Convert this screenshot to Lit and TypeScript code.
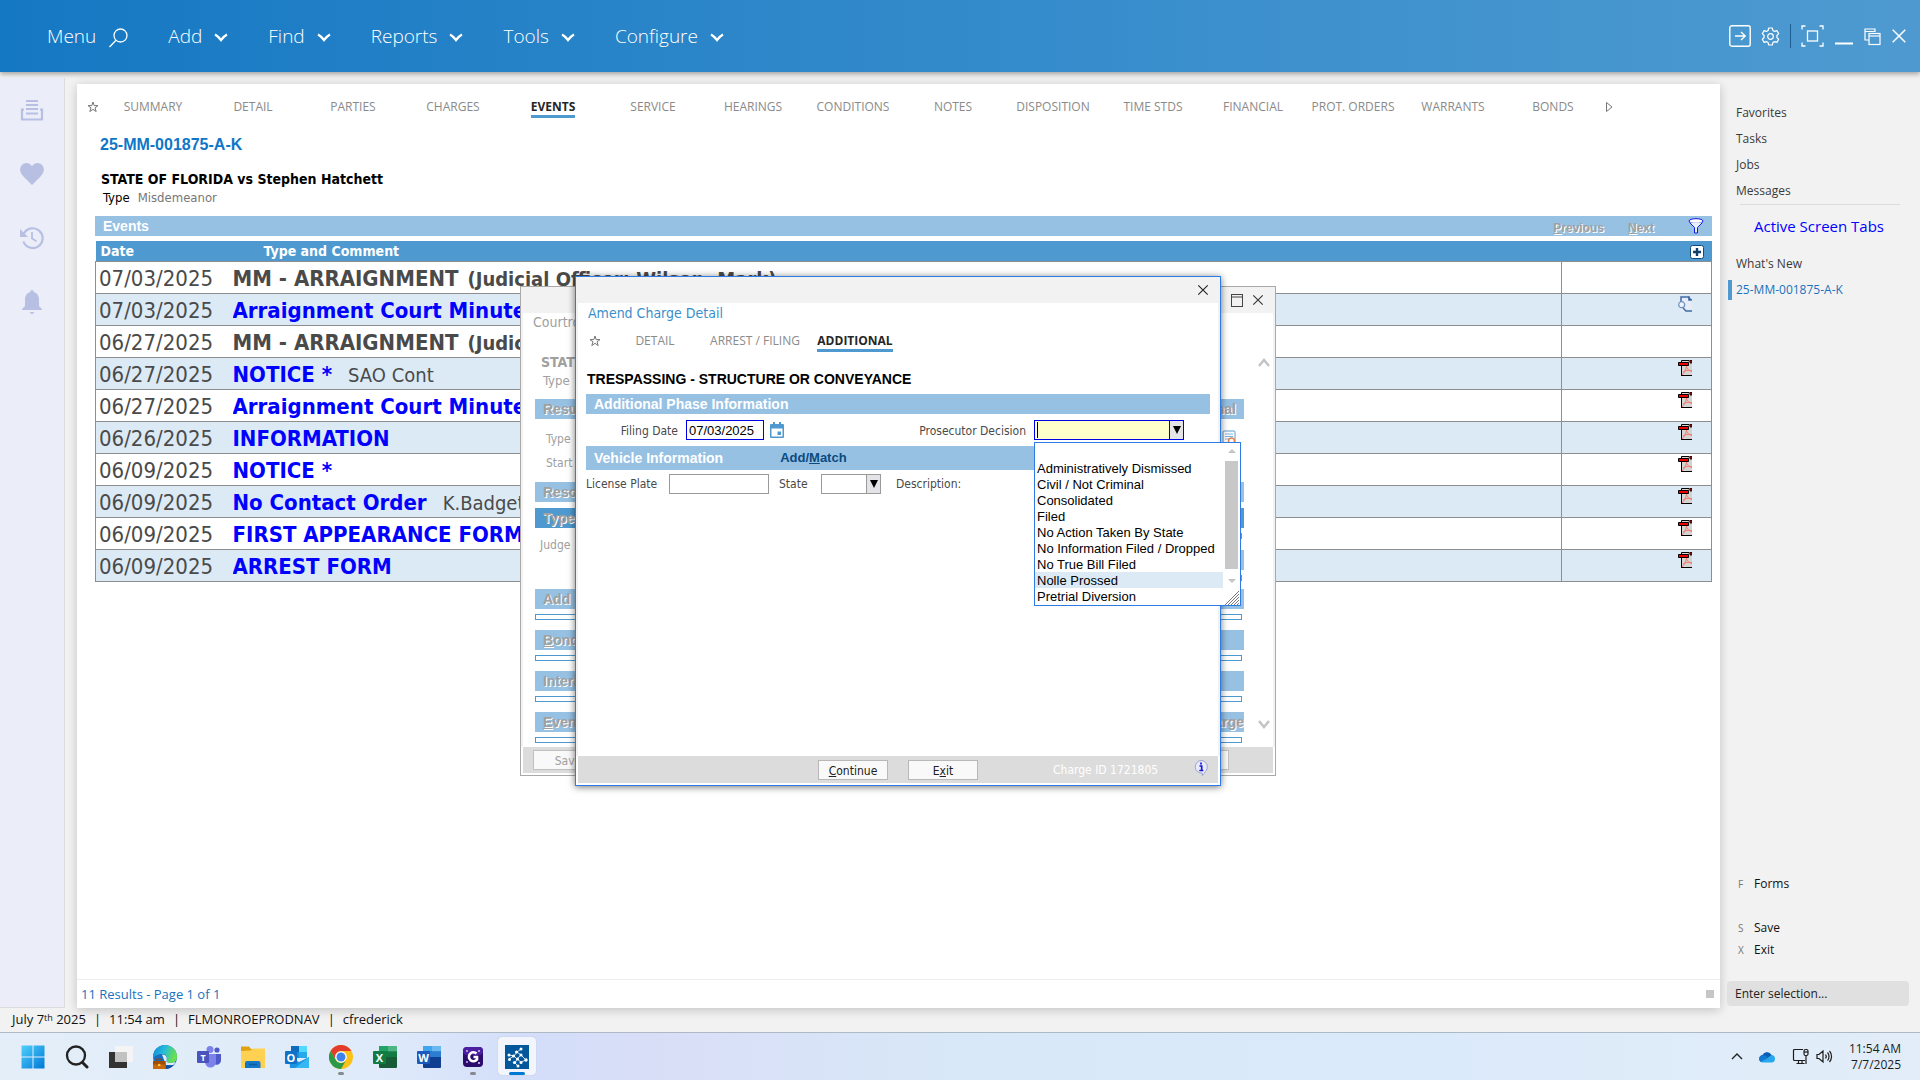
import { LitElement, html, svg, css, nothing } from "lit";
import { customElement } from "lit/decorators.js";
import { classMap } from "lit/directives/class-map.js";

const base = css`
  *, *::before, *::after { box-sizing: border-box; }
  button { font: inherit; color: inherit; background: none; border: 0; padding: 0; margin: 0; cursor: pointer; }
  a { color: inherit; text-decoration: none; }
  svg { display: block; flex: none; }
  ul { list-style: none; margin: 0; padding: 0; }
  .engraved { color: #a0a0a0; text-shadow: 1px 1px 0 #fff; }
  .tabs { display: flex; align-items: center; height: 24px; font: 12px/24px "Open Sans", sans-serif; color: #8a8a8a; }
  .tab { width: 100px; flex: none; display: flex; justify-content: center; }
  .tab span { display: block; line-height: 17px; white-space: nowrap; border-bottom: 3px solid transparent; margin-top: 2px; }
  .tab.on span { color: #262626; font-weight: 700; border-color: #4e9ad0; }
  .bar { display: flex; align-items: center; height: 20px; padding: 0 8px; background: #96c1e3; color: #fff; font: 700 14px/20px "Liberation Sans", sans-serif; white-space: nowrap; }
  .bar.dark { background: #4e9ad0; }
`;

const star = svg`<svg width="12" height="12" viewBox="0 0 12 12" fill="none" stroke="#777" stroke-width="1"><path d="M6 1l1.2 3.6H11L8 6.8l1.2 3.8L6 8.3l-3.2 2.3L4 6.8 1 4.6h3.8z"/></svg>`;
const cross = (c: string, s: number) => svg`<svg width=${s} height=${s} viewBox="0 0 14 14" stroke=${c} stroke-width="1.3" fill="none"><path d="M1.5 1.5l11 11M12.5 1.5l-11 11"/></svg>`;
const chevron = svg`<svg width="14" height="9" viewBox="0 0 14 9" fill="none" stroke="#fff" stroke-width="2.4"><path d="M1 1.5c2 1 4 3 6 5.5 2-2.500 4-4.500 6-5.500"/></svg>`;

@customElement("top-bar")
class TopBar extends LitElement {
  static styles = [base, css`
    :host { display: flex; align-items: center; justify-content: space-between; height: 72px; padding: 0 13px 0 47px;
      background: linear-gradient(90deg, #1578c3, #3c90cd 65%, #4e9ad0); color: #fff; box-shadow: 0 2px 5px rgba(0, 0, 0, .35);
      font: 19px/24px "Open Sans", sans-serif; font-weight: 300; position: relative; z-index: 1; }
    .menu { display: flex; gap: 40px; }
    .item { display: flex; align-items: center; gap: 12px; }
    .item svg { margin-top: 3px; }
    .tools { display: flex; align-items: center; gap: 10px; }
    .rule { width: 1px; height: 24px; background: #1c5d92; }
  `];
  render() {
    return html`
      <nav class="menu" aria-label="Main">
        <button class="item">Menu
          <svg width="20" height="20" viewBox="0 0 20 20" fill="none" stroke="#fff" stroke-width="1.3"><circle cx="12.500" cy="7.500" r="6.500"/><path d="M8 12.300L1.500 19"/></svg>
        </button>
        ${["Add", "Find", "Reports", "Tools", "Configure"].map((t) => html`<button class="item">${t} ${chevron}</button>`)}
      </nav>
      <div class="tools">
        <button aria-label="Open"><svg width="22" height="22" viewBox="0 0 22 22" fill="none" stroke="#fff" stroke-width="1.4"><rect x=".8" y=".8" width="20.400" height="20.400" rx="2"/><path d="M6 11h10M12 7l4.200 4-4.200 4"/></svg></button>
        <button aria-label="Settings"><svg width="19" height="19" viewBox="0 0 19 19" fill="none" stroke="#fff" stroke-width="1.200"><circle cx="9.500" cy="9.500" r="2.800"/><path d="M7.700 1h3.600l.6 2.500 1.600.9 2.400-.8 1.800 3.100-1.800 1.800v2l1.800 1.800-1.800 3.100-2.400-.8-1.600.9-.6 2.500H7.700l-.6-2.500-1.600-.9-2.400.8-1.800-3.100 1.800-1.800v-2L1.300 6.700l1.800-3.100 2.400.8 1.600-.9z" stroke-linejoin="round"/></svg></button>
        <span class="rule"></span>
        <button aria-label="Focus"><svg width="23" height="22" viewBox="0 0 23 22" fill="none" stroke="#fff" stroke-width="1.300"><path d="M1 4.500V1h3.500M18.500 1H22v3.500M22 17.500V21h-3.500M4.500 21H1v-3.500"/><rect x="6.500" y="6" width="10" height="10"/></svg></button>
        <button aria-label="Minimize"><svg width="20" height="20" viewBox="0 0 20 20"><path d="M1 17.500h18" stroke="#fff" stroke-width="2"/></svg></button>
        <button aria-label="Restore"><svg width="17" height="19" viewBox="0 0 17 19" fill="none" stroke="#fff" stroke-width="1.200"><path d="M5 13H1V2h10v3M1 4.500h10"/><rect x="5" y="6.500" width="11" height="11"/><path d="M5 9h11"/></svg></button>
        <button aria-label="Close">${cross("#fff", 16)}</button>
      </div>`;
  }
}

@customElement("side-rail")
class SideRail extends LitElement {
  static styles = [base, css`
    :host { display: flex; flex-direction: column; align-items: center; gap: 40px; width: 65px; padding-top: 20px; background: #ebeef8; border: solid #dcdce0; border-width: 0 1px 1px 0; }
  `];
  render() {
    const c = "#b7bfe3";
    return html`
      <button aria-label="Records"><svg width="24" height="24" viewBox="0 0 24 24" fill=${c}><path d="M6 2h12v2H6zM6 6h12v2H6zM6 10h12v2H6zM6 14.500h12v2H6z"/><path d="M4 11.500H2V21.500h20v-10H20" fill="none" stroke=${c} stroke-width="2.200"/></svg></button>
      <button aria-label="Favorites"><svg width="24" height="24" viewBox="0 0 24 24" fill=${c}><path d="M12 23L3 14C-3 7.500 1.500 1 6.500 1 9 1 11 2.300 12 4.200 13 2.300 15 1 17.500 1c5 0 9.500 6.500 3.500 13z"/></svg></button>
      <button aria-label="History"><svg width="24" height="24" viewBox="0 0 24 24" fill="none" stroke=${c} stroke-width="2.200"><path d="M4 7.500a9.900 9.900 0 1 1-.6 8"/><path d="M12 6v6.500l4.500 2.700" stroke-width="1.800"/><path d="M0 3v8h8z" fill=${c} stroke="none"/></svg></button>
      <button aria-label="Alerts"><svg width="24" height="24" viewBox="0 0 24 24" fill=${c}><path d="M12 0c1.200 0 1.600.9 1.600 2 3.600.8 5.400 3.800 5.400 7.500V16l3 3v1H2v-1l3-3V9.500C5 5.800 6.800 2.800 10.400 2c0-1.100.4-2 1.600-2zM10 22h4c0 1.200-1 2-2 2s-2-.8-2-2z"/></svg></button>`;
  }
}

type Row = { date: string; title: string; note?: string; officer?: string; link: boolean; icon: "" | "doc" | "pdf" };
const ROWS: Row[] = [
  { date: "07/03/2025", title: "MM - ARRAIGNMENT", officer: "(Judicial Officer: Wilson, Mark)", link: false, icon: "" },
  { date: "07/03/2025", title: "Arraignment Court Minutes", link: true, icon: "doc" },
  { date: "06/27/2025", title: "MM - ARRAIGNMENT", officer: "(Judicial Officer: Wilson, Mark)", link: false, icon: "" },
  { date: "06/27/2025", title: "NOTICE *", note: "SAO Cont", link: true, icon: "pdf" },
  { date: "06/27/2025", title: "Arraignment Court Minutes", link: true, icon: "pdf" },
  { date: "06/26/2025", title: "INFORMATION", link: true, icon: "pdf" },
  { date: "06/09/2025", title: "NOTICE *", link: true, icon: "pdf" },
  { date: "06/09/2025", title: "No Contact Order", note: "K.Badgett", link: true, icon: "pdf" },
  { date: "06/09/2025", title: "FIRST APPEARANCE FORM", link: true, icon: "pdf" },
  { date: "06/09/2025", title: "ARREST FORM", link: true, icon: "pdf" },
];
const pdf = svg`<svg width="14" height="16" viewBox="0 0 14 16"><path d="M3 0h11v16H3z" fill="#d4d4d4"/><path d="M3.500 15.500V.5H11v1M3 15.500h11" fill="none" stroke="#000"/><path d="M4 15c2-2 4.500-6 4.500-9 0 3 2.500 5 5.500 5.500M5 12c2-1.500 6-2 9-1.500" fill="none" stroke="#f57d6e"/><path d="M12 0h2v3h-2z" fill="#c00" stroke="#000" stroke-width=".8"/><path d="M.5 2.500h10v3H.5z" fill="#f00000" stroke="#000"/></svg>`;
const doc = svg`<svg width="14" height="16" viewBox="0 0 14 16"><path d="M3 .5h8l2.500 3v12H3z" fill="#e6ecf8"/><path d="M3 6V1h8v3h3M5 12l3 3h6" fill="none" stroke="#3f6ba5" stroke-width="1.500"/><path d="M10.500 0L14 4h-3.500z" fill="#3f6ba5"/><circle cx="3.700" cy="8.700" r="3" fill="#eef3fc" stroke="#6d8fbd" stroke-width="1.200"/></svg>`;

@customElement("case-panel")
class CasePanel extends LitElement {
  static styles = [base, css`
    :host { display: flex; flex-direction: column; background: #fff; box-shadow: 0 2px 10px rgba(0, 0, 0, .2); min-width: 0; }
    .tabs { padding-left: 10px; margin-top: 11px; }
    .star { width: 16px; display: flex; }
    .play { margin-left: 2px; }
    .case { margin: 16px 0 0 23px; font: 700 16px/20px "Liberation Sans", sans-serif; color: #0f76c8; }
    .style { margin: 15px 0 0 24px; font: 700 14px/18px "DejaVu Sans Condensed", "Noto Sans", sans-serif; color: #000; }
    .kind { display: flex; gap: 8px; margin: 1px 0 0 26px; font: 13px/18px "DejaVu Sans Condensed", "Noto Sans", sans-serif; color: #777; }
    .kind b { font-weight: 400; color: #000; }
    .grid { margin: 9px 8px 0 18px; }
    .bar .right { margin-left: auto; display: flex; gap: 24px; align-items: center; font-size: 12px; }
    .bar .engraved { padding-top: 3px; }
    .bar u { text-decoration: underline; }
    .bar svg { margin-left: 10px; }
    table { width: 100%; margin-top: 5px; border-collapse: collapse; table-layout: fixed; font: 22px/28px "DejaVu Sans Condensed", "Noto Sans", sans-serif; color: #4a4a4a; }
    th { height: 20px; padding: 1px 0 0; background: #4e9ad0; color: #fff; font: 700 14px/19px "DejaVu Sans Condensed", "Noto Sans", sans-serif; text-align: left; }
    th.h1 { padding-left: 5px; } th.h2 { padding-left: 31px; }
    .h4 svg { margin: 0 8px 0 auto; }
    .c1 { width: 137px; } .c4 { width: 150px; }
    td { height: 32px; padding: 2px 0 0; border: solid #8e8e8e; border-width: 1px 0; white-space: nowrap; overflow: hidden; }
    td:first-child { border-left-width: 1px; padding-left: 3px; }
    td:last-child { border-left-width: 1px; border-right-width: 1px; vertical-align: top; }
    td:last-child svg { margin: 0 19px 0 auto; }
    tr:nth-child(even) td { background: #dceaf6; }
    .t { font-weight: 700; margin-right: 16px; }
    .t.plain { margin-right: 9px; }
    a.t { color: #00f; }
    .o { font-size: 20px; font-weight: 700; }
    .n { font-size: 20px; }
    .foot { margin-top: auto; display: flex; align-items: center; justify-content: space-between; height: 29px; padding: 0 6px 0 4px; border-top: 1px solid #eee; font: 13px/18px "Open Sans", sans-serif; color: #1a72bd; }
    .grip { width: 8px; height: 8px; background: #c6c6c6; }
  `];
  render() {
    const tabs = ["SUMMARY", "DETAIL", "PARTIES", "CHARGES", "EVENTS", "SERVICE", "HEARINGS", "CONDITIONS", "NOTES", "DISPOSITION", "TIME STDS", "FINANCIAL", "PROT. ORDERS", "WARRANTS", "BONDS"];
    return html`
      <nav class="tabs"><span class="star">${star}</span>
        ${tabs.map((t) => html`<button class=${classMap({ tab: true, on: t === "EVENTS" })}><span>${t}</span></button>`)}
        <svg class="play" width="9" height="12" viewBox="0 0 9 12" fill="none" stroke="#777"><path d="M1.500 1.500v9L7 6z"/></svg>
      </nav>
      <div class="case">25-MM-001875-A-K</div>
      <div class="style">STATE OF FLORIDA vs Stephen Hatchett</div>
      <div class="kind"><b>Type</b><span>Misdemeanor</span></div>
      <div class="grid">
        <div class="bar">Events
          <span class="right"><span class="engraved"><u>P</u>revious</span><span class="engraved"><u>N</u>ext</span>
          <svg width="16" height="16" viewBox="0 0 16 16" fill="#fff" stroke="#1414e0"><ellipse cx="8" cy="3" rx="7" ry="2.300"/><path d="M1.500 4.500L6.500 9.500V15h3V9.500l5-5" fill="#e8f1fa"/></svg></span>
        </div>
        <table>
          <thead><tr><th class="h1 c1">Date</th><th class="h2">Type and Comment</th><th class="h4 c4">
            <svg width="14" height="14" viewBox="0 0 14 14"><rect x=".5" y=".5" width="13" height="13" rx="2" fill="#fff" stroke="#0f4a7d"/><path d="M7 3v8M3 7h8" stroke="#0f3f6d" stroke-width="2.400"/></svg></th></tr></thead>
          <tbody>${ROWS.map((r) => html`<tr>
            <td>${r.date}</td>
            <td>${r.link ? html`<a class="t" href="#">${r.title}</a>` : html`<span class="t plain">${r.title}</span>`}${r.officer ? html`<span class="o">${r.officer}</span>` : nothing}${r.note ? html`<span class="n">${r.note}</span>` : nothing}</td>
            <td>${r.icon === "pdf" ? pdf : r.icon === "doc" ? doc : nothing}</td></tr>`)}</tbody>
        </table>
      </div>
      <div class="foot"><span>11 Results - Page 1 of 1</span><span class="grip"></span></div>`;
  }
}

@customElement("side-panel")
class SidePanel extends LitElement {
  static styles = [base, css`
    :host { display: flex; flex-direction: column; width: 200px; padding: 28px 11px 2px 7px; font: 12px/26px "Open Sans", sans-serif; color: #3a3a3a; }
    .links a { display: block; padding-left: 9px; }
    .links a.on { color: #1a72bd; border-left: 4px solid #4e9ad0; padding-left: 4px; margin-left: 1px; line-height: 20px; margin-top: 3px; }
    .line { height: 1px; background: #dcdcdc; margin: 0 9px 0 13px; }
    .title { color: #00f; font-size: 15px; line-height: 24px; margin: 9px 0 13px 27px; white-space: nowrap; }
    .cmds { margin-top: auto; color: #111; line-height: 22px; }
    .cmds button { display: flex; gap: 12px; padding-left: 11px; line-height: 22px; }
    .cmds kbd { font: 10px/22px "Open Sans", sans-serif; color: #777; width: 4px; }
    .cmds .gap { margin-bottom: 22px; }
    input { margin-top: 20px; height: 25px; width: 100%; border: 0; border-radius: 4px; background: #e0e0e0; padding: 0 8px; font: 12px/18px "Open Sans", sans-serif; }
    input::placeholder { color: #222; opacity: 1; }
  `];
  render() {
    return html`
      <nav class="links"><a href="#">Favorites</a><a href="#">Tasks</a><a href="#">Jobs</a><a href="#">Messages</a></nav>
      <div class="line"></div>
      <div class="title">Active Screen Tabs</div>
      <nav class="links"><a href="#">What's New</a><a class="on" href="#">25-MM-001875-A-K</a></nav>
      <div class="cmds"><button class="gap"><kbd>F</kbd>Forms</button><button><kbd>S</kbd>Save</button><button><kbd>X</kbd>Exit</button></div>
      <input type="text" aria-label="Enter selection" placeholder="Enter selection...">`;
  }
}

const windowStyles = css`
  :host { position: absolute; display: flex; flex-direction: column; background: #fff; font: 12px/20px "DejaVu Sans Condensed", "Noto Sans", sans-serif; }
  .titlebar { display: flex; align-items: center; justify-content: flex-end; height: 26px; background: #f2f2f2; flex: none; }
  .foot { display: flex; align-items: center; height: 27px; background: #dcdcdc; margin: auto 2px 2px; flex: none; }
  .btn { height: 20px; width: 70px; border: 1px solid #b8b8b8; background: #f9f9f9; line-height: 18px; padding-top: 1px; color: #222; }
`;

@customElement("minutes-window")
class MinutesWindow extends LitElement {
  static styles = [base, windowStyles, css`
    :host { left: 520px; top: 286px; width: 756px; height: 490px; border: 1px solid #a9a9a9; color: #a0a0a0; }
    .titlebar { gap: 9px; padding-right: 11px; }
    .main { display: flex; flex: 1; border: solid #f2f2f2; border-width: 0 2px; }
    .body { flex: 1; padding: 0 0 0 12px; min-width: 0; }
    .scroll { width: 29px; display: flex; flex-direction: column; justify-content: space-between; align-items: flex-end; padding: 45px 3px 18px 0; }
    .name { font-size: 14px; line-height: 18px; margin-left: -2px; }
    .style { margin: 22px 0 0 6px; font-weight: 700; font-size: 14px; line-height: 18px; }
    .kind { margin: 1px 0 9px 8px; font-size: 13px; line-height: 18px; }
    .bar { justify-content: space-between; }
    .bar.flush { padding-right: 0; }
    .line { display: flex; justify-content: space-between; height: 24px; line-height: 26px; padding: 0 8px 0 11px; }
    .line svg { margin-top: 4px; }
    .lines { padding: 7px 0 8px; }
    .dark { margin-top: 6px; }
    .cols { display: flex; height: 61px; }
    .cols > * { flex: 1; padding: 7px 0 0 5px; }
    .cols .bar { margin-top: 11px; }
    .box { height: 6px; border: 1px solid #4e9ad0; margin: 5px 2px 10px 0; }
    .box:last-child { margin-bottom: 0; }
    .cols .part { padding: 0; }
    .btn { color: #a0a0a0; border-color: #c0c0c0; }
    .foot { height: 26px; padding: 0 44px 0 10px; justify-content: space-between; }
  `];
  render() {
    return html`
      <div class="titlebar">
        <button aria-label="Maximize"><svg width="12" height="13" viewBox="0 0 12 13" fill="none" stroke="#444"><rect x=".5" y=".5" width="11" height="12"/><path d="M0 3h12"/></svg></button>
        <button aria-label="Close">${cross("#333", 12)}</button>
      </div>
      <div class="main">
        <div class="body">
          <div class="name">Courtroom</div>
          <div class="style">STATE OF</div>
          <div class="kind">Type</div>
          <div class="bar"><span class="engraved">Results</span><span class="engraved">Additional</span></div>
          <div class="lines">
            <div class="line"><span>Type</span><svg width="14" height="16" viewBox="0 0 14 16"><rect x="1" y="1" width="12" height="15" rx="1" fill="#fff" stroke="#5a9bd0"/><path d="M3 4h8M3 6.500h8M3 9h4" stroke="#7fb2dc"/><circle cx="9.500" cy="11" r="3" fill="none" stroke="#e8834f" stroke-width="1.600"/></svg></div>
            <div class="line"><span>Start</span></div>
          </div>
          <div class="bar"><span class="engraved">Resources</span></div>
          <div class="bar dark"><span class="engraved">Type</span></div>
          <div class="cols"><span>Judge</span><div class="part"><div class="box"></div><div class="bar"></div><div class="box"></div></div></div>
          ${[["", "Add", ""], ["B", "ond", ""], ["", "Interim", ""], ["E", "vents", "Charge"]].map(([u, t, r]) => html`
            <div class="bar flush"><span class="engraved"><u>${u}</u>${t}</span><span class="engraved">${r}</span></div><div class="box"></div>`)}
        </div>
        <div class="scroll">
          <svg width="12" height="9" viewBox="0 0 12 9" fill="none" stroke="#c4c4c4" stroke-width="2.500"><path d="M1 8l5-6 5 6"/></svg>
          <svg width="12" height="9" viewBox="0 0 12 9" fill="none" stroke="#c4c4c4" stroke-width="2.500"><path d="M1 1l5 6 5-6"/></svg>
        </div>
      </div>
      <div class="foot"><button class="btn" disabled>Save</button><button class="btn" disabled aria-label="More"></button></div>`;
  }
}

@customElement("charge-window")
class ChargeWindow extends LitElement {
  static styles = [base, windowStyles, css`
    :host { left: 575px; top: 276px; width: 646px; height: 510px; border: 1px solid #2f7be6; box-shadow: 0 1px 7px rgba(0, 0, 0, .55); color: #4a4a4a; }
    .titlebar { padding-right: 11px; }
    .main { flex: 1; padding: 0 8px; border: solid #f2f2f2; border-width: 0 2px; }
    .name { margin-left: 2px; font-size: 14px; color: #3a8fcb; }
    .tabs { margin: 6px 0 0 3px; }
    .star { width: 16px; }
    .head { margin: 18px 0 7px 1px; font: 700 14px/16px "Liberation Sans", sans-serif; color: #000; }
    .row { display: flex; align-items: center; height: 32px; }
    .row.low { height: 27px; }
    .row label { white-space: nowrap; text-align: right; padding-top: 1px; }
    .bar.tall { height: 24px; }
    .add { margin-left: 57px; color: #0b4a80; font-weight: 700; font-size: 13px; }
    input, .combo { height: 20px; border: 1px solid #9a9a9a; background: #fff; font: 13px/18px "Liberation Sans", sans-serif; padding: 0 2px; border-radius: 0; margin: 0; color: #000; }
    .date { width: 78px; border-color: #0000e6; margin: 0 6px 0 8px; }
    .l1 { width: 92px; }
    .l2 { margin-left: auto; margin-right: 8px; }
    .combo { display: flex; padding: 0; align-items: stretch; }
    .combo select { flex: 1; min-width: 0; appearance: none; border: 0; padding: 0 2px; margin: 0; background: none; font: inherit; outline: none; }
    .arrow { width: 14px; background: #e3e3e8; border-left: 1px solid #9a9a9a; display: grid; place-items: center; }
    .decision { width: 150px; margin-right: 26px; background: #ffc; border-color: #0000e6; }
    .decision .arrow { border-color: #0000e6; }
    .caret { width: 1px; margin: 1px 0 1px 2px; background: #000; }
    .low .lp { width: 73px; text-align: left; }
    .plate { width: 100px; margin: 0 10px; }
    .low .ls { width: 32px; text-align: left; }
    .state { width: 60px; margin: 0 15px 0 10px; }
    .foot { gap: 20px; padding-left: 240px; }
    .id { margin-left: 55px; padding-top: 1px; color: #fff; }
    .info { margin-left: auto; padding: 0 10px 4px 0; }
    .list { position: absolute; left: 458px; top: 165px; width: 207px; height: 164px; background: #fff; border: 1px solid #2f7be6; display: flex; font: 13px/16px "Liberation Sans", sans-serif; color: #000; }
    .opts { flex: 1; padding-top: 1px; min-width: 0; }
    .opts li { height: 16px; line-height: 18px; padding-left: 2px; white-space: nowrap; }
    .opts li.on { background: #dceaf6; }
    .sb { width: 17px; display: flex; flex-direction: column; align-items: center; padding-top: 6px; }
    .thumb { width: 13px; height: 108px; background: #c8c8c8; margin: 8px 0 10px; }
    .sizer { margin-top: auto; }
  `];
  render() {
    const opts = ["", "Administratively Dismissed", "Civil / Not Criminal", "Consolidated", "Filed", "No Action Taken By State", "No Information Filed / Dropped", "No True Bill Filed", "Nolle Prossed", "Pretrial Diversion"];
    const tri = svg`<svg width="8" height="8" viewBox="0 0 8 8"><path d="M0 0h8L4 8z" fill="#000"/></svg>`;
    return html`
      <div class="titlebar"><button aria-label="Close">${cross("#222", 12)}</button></div>
      <div class="main">
        <div class="name">Amend Charge Detail</div>
        <nav class="tabs"><span class="star">${star}</span>
          ${["DETAIL", "ARREST / FILING", "ADDITIONAL"].map((t) => html`<button class=${classMap({ tab: true, on: t === "ADDITIONAL" })}><span>${t}</span></button>`)}
        </nav>
        <div class="head">TRESPASSING - STRUCTURE OR CONVEYANCE</div>
        <div class="bar">Additional Phase Information</div>
        <div class="row">
          <label class="l1" for="filed">Filing Date</label><input class="date" id="filed" type="text" value="07/03/2025">
          <button aria-label="Pick date"><svg width="14" height="16" viewBox="0 0 14 16"><path d="M1 2h12a1 1 0 0 1 1 1v12a1 1 0 0 1-1 1H1a1 1 0 0 1-1-1V3a1 1 0 0 1 1-1zm.500 4.500v8h11v-8z" fill="#4e9ad0" fill-rule="evenodd"/><path d="M3 0h2v3H3zM9 0h2v3H9zM7.500 9.500H11V13H7.500z" fill="#4e9ad0"/></svg></button>
          <label class="l2" for="decision">Prosecutor Decision</label>
          <span class="combo decision"><span class="caret"></span><select id="decision"><option></option></select><span class="arrow">${tri}</span></span>
        </div>
        <div class="bar tall">Vehicle Information<button class="add">Add/<u>M</u>atch</button></div>
        <div class="row low">
          <label class="lp" for="plate">License Plate</label><input class="plate" id="plate" type="text">
          <label class="ls" for="state">State</label><span class="combo state"><select id="state"><option></option></select><span class="arrow">${tri}</span></span>
          <span>Description:</span>
        </div>
      </div>
      <div class="foot"><button class="btn"><u>C</u>ontinue</button><button class="btn">E<u>x</u>it</button><span class="id">Charge ID 1721805</span>
        <button class="info" aria-label="Information"><svg width="14" height="16" viewBox="0 0 14 16"><path d="M7 .5a6.300 6.300 0 0 1 6.300 6.500c0 3-2 4.500-2.600 5.500-.5 1-.9 2-2.700 3 .6-1.300.4-2 .2-2.400A6.300 6.300 0 1 1 7 .5z" fill="#e9ebfb" stroke="#8d93c8" stroke-width=".8"/><path d="M7 2.500v2M5.500 6H7.700v4.500M5.300 10.500h4" stroke="#1a1ad0" stroke-width="1.700" fill="none"/></svg></button>
      </div>
      <div class="list">
        <ul class="opts" role="listbox" aria-label="Prosecutor Decision">${opts.map((o) => html`<li role="option" class=${classMap({ on: o === "Nolle Prossed" })}>${o}</li>`)}</ul>
        <div class="sb">
          <svg width="8" height="4" viewBox="0 0 8 4"><path d="M0 4h8L4 0z" fill="#c4c4c4"/></svg>
          <span class="thumb"></span>
          <svg width="8" height="4" viewBox="0 0 8 4"><path d="M0 0h8L4 4z" fill="#c4c4c4"/></svg>
          <svg class="sizer" width="15" height="15" viewBox="0 0 15 15" stroke="#777" stroke-width="1"><path d="M1 15L15 1M4 15L15 4M7 15l8-8M10 15l5-5M13 15l2-2"/></svg>
        </div>
      </div>`;
  }
}

const officeIcon = (l: string, a: string, b: string, c: string, box: string) => svg`<svg width="24" height="24" viewBox="0 0 24 24"><rect x="6" y="1" width="18" height="22" rx="1" fill=${c}/><path d="M6 1h18v5.500H6z" fill=${a}/><path d="M6 6.500h18V12H6z" fill=${b}/><path d="M15 1h9v5.500h-9z" fill="#fff" opacity=".2"/><rect x="0" y="6" width="13" height="13" rx="1" fill=${box}/><text x="6.500" y="16.500" text-anchor="middle" font-family="Open Sans, sans-serif" font-weight="700" font-size="11" fill="#fff">${l}</text></svg>`;

const apps = [
  { n: "Start", i: svg`<svg width="24" height="24" viewBox="0 0 24 24"><defs><linearGradient id="w" x1="0" y1="0" x2="1" y2="1"><stop offset="0" stop-color="#4fd0fb"/><stop offset="1" stop-color="#0078d7"/></linearGradient></defs><path d="M.5.5h11v11H.5zM12.500.5h11v11h-11zM.5 12.500h11v11H.5zM12.500 12.500h11v11h-11z" fill="url(#w)"/></svg>` },
  { n: "Search", i: svg`<svg width="24" height="24" viewBox="0 0 24 24" fill="none" stroke="#222"><circle cx="11" cy="10.500" r="9" stroke-width="2.300"/><path d="M17.500 17.500l4.500 4.500" stroke-width="3" stroke-linecap="round"/></svg>` },
  { n: "Task View", i: svg`<svg width="24" height="24" viewBox="0 0 24 24"><path d="M0 7h18v16H0z" fill="#333"/><path d="M6 1h18v16H6z" fill="#f4f4f4"/><path d="M6 7h12v10H6z" fill="#c2c2c2"/></svg>` },
  { n: "Edge", i: svg`<svg width="24" height="24" viewBox="0 0 24 24"><defs><linearGradient id="e" x1="0" y1="0" x2="1" y2=".3"><stop offset="0" stop-color="#1386d6"/><stop offset=".5" stop-color="#25bbdb"/><stop offset="1" stop-color="#69e04c"/></linearGradient></defs><circle cx="12" cy="12" r="12" fill="#1470c4"/><path d="M0 12a12 12 0 0 1 24 0c0 4-3 6-7 6-3 0-4-1.500-3.500-3 1.500-3-.5-6-4.500-6-5 0-9 2-9 7z" fill="url(#e)"/><path d="M9 9.500c4 0 5.500 3 4.500 5.500-.5 1.500.5 3 3.500 3 2 0 4-.5 5.500-1.500L21 20h-8z" fill="#e2edf8"/><path d="M13 20c3 1.500 6 1 8.500-1A12 12 0 0 1 13 24z" fill="#124e9c"/><path d="M0 16h12.500v8H0z" fill="#c8680c"/><path d="M0 16h12.500v3.500H0z" fill="#a04d06"/><path d="M4 16v-2h4.500v2" fill="none" stroke="#8c4204" stroke-width="1.200"/><circle cx="6.200" cy="20" r="1.300" fill="#ffc83d"/></svg>` },
  { n: "Teams", i: svg`<svg width="24" height="24" viewBox="0 0 24 24"><circle cx="13" cy="4.500" r="3.500" fill="#7b83eb"/><circle cx="20" cy="5" r="2.600" fill="#5059c9"/><path d="M17 9h7v7a4.500 4.500 0 0 1-7 3z" fill="#5059c9"/><path d="M8 9h11v8a5.500 5.500 0 0 1-11 0z" fill="#7b83eb"/><rect y="6" width="12" height="12" rx="1" fill="#4b53bc"/><text x="6" y="15.500" text-anchor="middle" font-family="Open Sans, sans-serif" font-weight="700" font-size="9" fill="#fff">T</text></svg>` },
  { n: "File Explorer", i: svg`<svg width="24" height="24" viewBox="0 0 24 24"><path d="M0 1.500h8l2 2.500h14v19H0z" fill="#e2a10e"/><path d="M0 6l9.500-.5L12 3.500h12V23H0z" fill="#ffd152"/><path d="M4 23v-5a2 2 0 0 1 2-2h11.500a2 2 0 0 1 2 2v5z" fill="#1377c8"/><path d="M8 19.500h8" stroke="#0b5a9d" stroke-width="1.500"/></svg>` },
  { n: "Outlook", i: svg`<svg width="24" height="24" viewBox="0 0 24 24"><path d="M6 1h16v12H6z" fill="#1490df"/><path d="M14 1h8v6h-8z" fill="#50d9ff"/><path d="M14 7h8v6h-8z" fill="#28a8ea"/><path d="M6 1h8v6H6z" fill="#0f6cbd"/><path d="M4 12l10 5 10-5v11H5z" fill="#1a94e0"/><path d="M24 12L10 23h14z" fill="#35b8f1"/><rect y="6" width="12" height="13" rx="1" fill="#0f72c9"/><text x="6" y="16.500" text-anchor="middle" font-family="Open Sans, sans-serif" font-weight="700" font-size="11" fill="#fff">O</text></svg>` },
  { n: "Chrome", dot: true, i: svg`<svg width="24" height="24" viewBox="0 0 24 24"><circle cx="12" cy="12" r="12" fill="#fbc116"/><path d="M1.600 6A12 12 0 0 1 22.400 6H12a6 6 0 0 0-5.200 9z" fill="#e33b2e"/><path d="M1.600 6a12 12 0 0 0 10.400 18L17.200 15A6 6 0 0 1 6.800 15z" fill="#2a9a49"/><circle cx="12" cy="12" r="5.800" fill="#fff"/><circle cx="12" cy="12" r="4.500" fill="#3f82ee"/></svg>` },
  { n: "Excel", i: officeIcon("X", "#21a366", "#107c41", "#185c37", "#107c41") },
  { n: "Word", i: officeIcon("W", "#41a5ee", "#2b7cd3", "#103f91", "#185abd") },
  { n: "Recorder", dot: true, i: svg`<svg width="24" height="24" viewBox="0 0 24 24"><rect x="2" y="2" width="20" height="20" rx="4" fill="#2b0b6b"/><rect x="2" y="2" width="20" height="8" rx="4" fill="#4b1fa0"/><path d="M15.500 8.500a4.500 4.500 0 1 0 .5 6v-2.500h-3.500" fill="none" stroke="#fff" stroke-width="2.600"/><g fill="#d7c8ff"><circle cx="6" cy="6" r=".9"/><circle cx="18" cy="6" r="1"/><circle cx="6" cy="17" r=".9"/><circle cx="18" cy="18" r="1.100"/></g></svg>` },
  { n: "Case Manager", on: true, i: svg`<svg width="24" height="24" viewBox="0 0 24 24"><path d="M0 0h24v24H0z" fill="#02589a"/><g stroke="#fff" stroke-width=".8" fill="none"><path d="M16 4l-4 3-3 4-5-1M12 7l4 3-4 4 4 3M4 14l5-3 3 3-2 4 3 3M16 10l5 5-5 2"/></g><g fill="#fff"><circle cx="16" cy="4" r="1.500"/><circle cx="11.500" cy="7" r="1.500"/><circle cx="16" cy="10" r="1.600"/><circle cx="4" cy="10" r="1.500"/><circle cx="8.500" cy="11" r="1.600"/><circle cx="12.500" cy="14" r="1.500"/><circle cx="21" cy="15" r="1.700"/><circle cx="4.500" cy="14.500" r="1.500"/><circle cx="9.500" cy="17.500" r="1.600"/><circle cx="16" cy="17.500" r="1.500"/><circle cx="13" cy="21" r="1.500"/></g></svg>` },
];

@customElement("task-bar")
class TaskBar extends LitElement {
  static styles = [base, css`
    :host { display: flex; align-items: center; justify-content: space-between; height: 48px; padding: 0 19px 0 11px; border-top: 1px solid #aeb9c6;
      background: linear-gradient(90deg, #e3eef8 0, #dfebfa 20%, #d3defa 27%, #d9def7 34%, #d8e8f8 50%, #dbeafa 75%, #e2edf8); }
    .apps, .tray { display: flex; align-items: center; }
    .app { width: 44px; height: 47px; display: flex; align-items: center; justify-content: center; position: relative; }
    .app.on::before { content: ""; position: absolute; inset: 4px 3px 5px; background: #f2f5fc; border-radius: 4px; box-shadow: 0 0 1px #aaa; }
    .app svg { position: relative; }
    .app.dot::after, .app.on::after { content: ""; position: absolute; bottom: 5px; width: 6px; height: 3px; border-radius: 2px; background: #858a90; }
    .app.on::after { width: 16px; background: #0078d4; }
    .tray { gap: 16px; color: #1c1c1c; font: 12px/16px "Open Sans", sans-serif; }
    .pair { display: flex; gap: 7px; }
    .time { text-align: right; }
  `];
  render() {
    return html`
      <div class="apps">${apps.map((a: any) => html`<button class=${classMap({ app: true, on: !!a.on, dot: !!a.dot })} aria-label=${a.n}>${a.i}</button>`)}</div>
      <div class="tray">
        <svg width="12" height="7" viewBox="0 0 12 7" fill="none" stroke="#222" stroke-width="1.400"><path d="M1 6l5-5 5 5"/></svg>
        <svg width="17" height="12" viewBox="0 0 17 12"><path d="M4 11.500a3.800 3.800 0 0 1-.5-7.500A5 5 0 0 1 12.500 4 3.800 3.800 0 0 1 13 11.500z" fill="#28a8ea"/><path d="M3.500 4A5 5 0 0 1 12.500 4L7 8 1 10C-.5 7 .5 4.500 3.500 4z" fill="#0a5cb5"/><path d="M3.500 4.300c2-.5 4 .5 5.500 2L2 11C-1 9 0 5 3.500 4.300z" fill="#1078d0"/></svg>
        <span class="pair">
          <svg width="17" height="17" viewBox="0 0 17 17" fill="none" stroke="#1c1c1c" stroke-width="1.200"><path d="M11 1.500H2.500a1 1 0 0 0-1 1v9a1 1 0 0 0 1 1H13M4.500 15.500h8M6.500 12.500v3M10 12.500v3M14 8v8"/><rect x="12" y="1.500" width="4" height="6" rx="1.500"/><path d="M12 4h4"/></svg>
          <svg width="17" height="17" viewBox="0 0 17 17" fill="none" stroke="#1c1c1c" stroke-width="1.200"><path d="M1 6.500h2L7 3v11l-4-3.500H1zM9.500 6.500c.8 1 .8 3 0 4M11.500 4.500c2 2 2 6 0 8M13.500 3c2.700 3 2.700 8 0 11"/></svg>
        </span>
        <span class="time">11:54 AM<br>7/7/2025</span>
      </div>`;
  }
}

@customElement("app-root")
class AppRoot extends LitElement {
  static styles = [base, css`
    :host { display: flex; flex-direction: column; min-height: 100vh; position: relative; background: #f2f2f2; }
    .mid { flex: 1; display: flex; align-items: stretch; }
    side-rail { margin-top: 6px; flex: none; }
    case-panel { flex: 1; margin: 12px 0 0 12px; }
    side-panel { flex: none; }
    .status { display: flex; gap: 8px; height: 24px; padding-left: 12px; font: 13px/22px "Open Sans", sans-serif; color: #111; }
    sup { font-size: 9px; line-height: 9px; vertical-align: 3px; }
  `];
  render() {
    return html`
      <top-bar></top-bar>
      <div class="mid"><side-rail></side-rail><case-panel></case-panel><side-panel></side-panel></div>
      <div class="status"><span>July 7<sup>th</sup> 2025</span><span>|</span><span>11:54 am</span><span>|</span><span>FLMONROEPRODNAV</span><span>|</span><span>cfrederick</span></div>
      <task-bar></task-bar>
      <minutes-window></minutes-window>
      <charge-window></charge-window>`;
  }
}
